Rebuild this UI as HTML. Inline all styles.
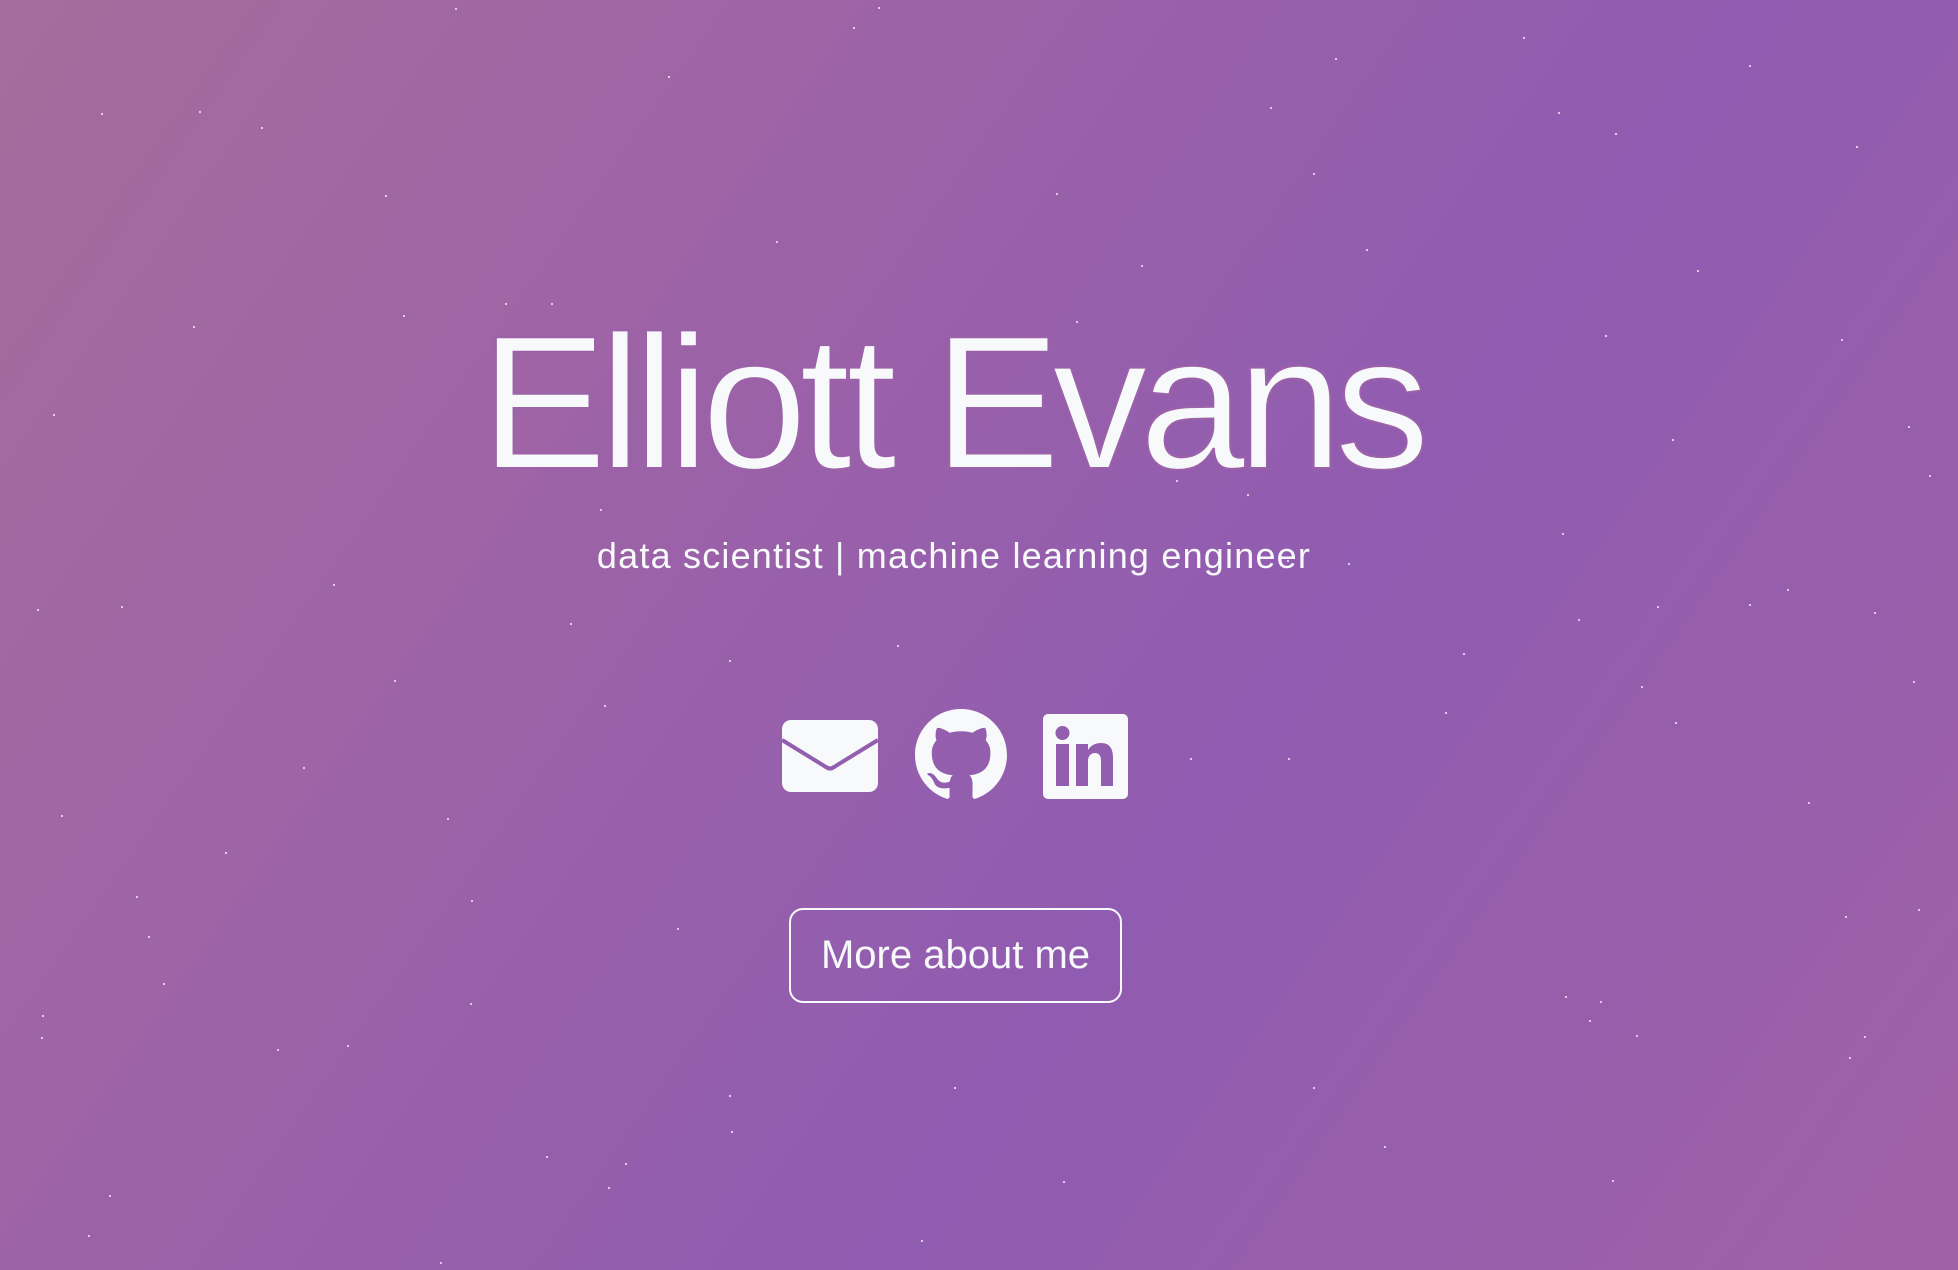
<!DOCTYPE html>
<html><head><meta charset="utf-8"><style>
html,body{margin:0;padding:0;}
body{width:1958px;height:1270px;overflow:hidden;position:relative;
background:linear-gradient(125deg,#a66c9c 0%,#9c62a8 35%,#905cb1 62%,#9a5faa 85%,#a161a7 100%);
font-family:"Liberation Sans",sans-serif;color:#f8f9fa;}
.t{position:absolute;left:0;width:1958px;text-align:center;}
h1{position:absolute;left:-28px;width:1958px;text-align:center;margin:0;top:298px;font-size:190px;font-weight:normal;letter-spacing:-8px;line-height:210px;-webkit-text-stroke:2px #9b62a9;}
.sub{top:534px;font-size:36px;line-height:44px;letter-spacing:1.2px;left:-25px;}
.btn{position:absolute;left:789px;top:908px;width:329px;height:91px;border:2px solid #f8f9fa;border-radius:14px;font-size:40px;line-height:91px;text-align:center;}
.s{position:absolute;width:2px;height:2px;background:#fff;border-radius:1px;opacity:.9}
</style></head><body>
<h1>Elliott Evans</h1>
<div class="t sub">data scientist | machine learning engineer</div>
<svg style="position:absolute;left:782px;top:720px" width="96" height="72" viewBox="0 0 96 72">
<rect x="0" y="0" width="96" height="72" rx="9" fill="#f8f9fa"/>
<path d="M0 20 L44 47 Q48 50 52 47 L96 20" fill="none" stroke="#935db0" stroke-width="4"/>
</svg>
<svg style="position:absolute;left:914px;top:709px" width="94" height="92" viewBox="0 0 16 16">
<path fill="#f8f9fa" d="M8 0C3.58 0 0 3.58 0 8c0 3.54 2.29 6.53 5.470 7.59.4.07.55-.17.55-.38 0-.19-.01-.82-.01-1.49-2.01.37-2.53-.49-2.69-.94-.09-.23-.48-.94-.82-1.130-.28-.15-.68-.52-.01-.53.63-.01 1.08.58 1.23.82.72 1.21 1.87.87 2.33.66.07-.52.28-.87.51-1.07-1.78-.2-3.64-.89-3.64-3.95 0-.87.31-1.59.82-2.15-.08-.2-.36-1.02.08-2.12 0 0 .67-.21 2.2.82.64-.18 1.32-.27 2-.27.68 0 1.36.09 2 .27 1.53-1.04 2.2-.82 2.2-.82.44 1.1.16 1.92.08 2.12.51.56.82 1.27.82 2.15 0 3.07-1.87 3.75-3.65 3.95.29.25.54.73.54 1.48 0 1.07-.01 1.93-.01 2.2 0 .21.15.46.55.38A8.013 8.013 0 0016 8c0-4.42-3.58-8-8-8z"/>
</svg>
<svg style="position:absolute;left:1043px;top:714px" width="85" height="85" viewBox="0 0 85 85">
<rect width="85" height="85" rx="5" fill="#f8f9fa"/>
<rect x="13" y="30" width="13" height="42" fill="#935db0"/>
<circle cx="19.5" cy="19" r="7" fill="#935db0"/>
<path d="M33 30h12v6c3-5 8-7 13-7 9 0 12 6 12 15v28H58V47c0-5-2-8-6-8s-7 3-7 8v25H33z" fill="#935db0"/>
</svg>
<div class="btn">More about me</div>
<div class="s" style="left:101px;top:113px"></div><div class="s" style="left:199px;top:111px"></div><div class="s" style="left:261px;top:127px"></div><div class="s" style="left:385px;top:195px"></div><div class="s" style="left:455px;top:8px"></div><div class="s" style="left:668px;top:76px"></div><div class="s" style="left:853px;top:27px"></div><div class="s" style="left:878px;top:7px"></div><div class="s" style="left:776px;top:241px"></div><div class="s" style="left:1056px;top:193px"></div><div class="s" style="left:1141px;top:265px"></div><div class="s" style="left:1313px;top:173px"></div><div class="s" style="left:1335px;top:58px"></div><div class="s" style="left:1270px;top:107px"></div><div class="s" style="left:1366px;top:249px"></div><div class="s" style="left:1523px;top:37px"></div><div class="s" style="left:1558px;top:112px"></div><div class="s" style="left:1615px;top:133px"></div><div class="s" style="left:1697px;top:270px"></div><div class="s" style="left:1749px;top:65px"></div><div class="s" style="left:1856px;top:146px"></div><div class="s" style="left:1841px;top:339px"></div><div class="s" style="left:1908px;top:426px"></div><div class="s" style="left:1929px;top:475px"></div><div class="s" style="left:1672px;top:439px"></div><div class="s" style="left:1605px;top:335px"></div><div class="s" style="left:1562px;top:533px"></div><div class="s" style="left:1578px;top:619px"></div><div class="s" style="left:1657px;top:606px"></div><div class="s" style="left:1749px;top:604px"></div><div class="s" style="left:1787px;top:589px"></div><div class="s" style="left:1874px;top:612px"></div><div class="s" style="left:1913px;top:681px"></div><div class="s" style="left:1641px;top:686px"></div><div class="s" style="left:1675px;top:722px"></div><div class="s" style="left:1445px;top:712px"></div><div class="s" style="left:1463px;top:653px"></div><div class="s" style="left:1288px;top:758px"></div><div class="s" style="left:1808px;top:802px"></div><div class="s" style="left:1845px;top:916px"></div><div class="s" style="left:1918px;top:909px"></div><div class="s" style="left:1565px;top:996px"></div><div class="s" style="left:1600px;top:1001px"></div><div class="s" style="left:1636px;top:1035px"></div><div class="s" style="left:1589px;top:1020px"></div><div class="s" style="left:1864px;top:1036px"></div><div class="s" style="left:1849px;top:1057px"></div><div class="s" style="left:1612px;top:1180px"></div><div class="s" style="left:1384px;top:1146px"></div><div class="s" style="left:1313px;top:1087px"></div><div class="s" style="left:1063px;top:1181px"></div><div class="s" style="left:954px;top:1087px"></div><div class="s" style="left:921px;top:1240px"></div><div class="s" style="left:729px;top:1095px"></div><div class="s" style="left:731px;top:1131px"></div><div class="s" style="left:625px;top:1163px"></div><div class="s" style="left:608px;top:1187px"></div><div class="s" style="left:546px;top:1156px"></div><div class="s" style="left:440px;top:1262px"></div><div class="s" style="left:109px;top:1195px"></div><div class="s" style="left:88px;top:1235px"></div><div class="s" style="left:277px;top:1049px"></div><div class="s" style="left:347px;top:1045px"></div><div class="s" style="left:163px;top:983px"></div><div class="s" style="left:148px;top:936px"></div><div class="s" style="left:136px;top:896px"></div><div class="s" style="left:42px;top:1015px"></div><div class="s" style="left:41px;top:1037px"></div><div class="s" style="left:470px;top:1003px"></div><div class="s" style="left:677px;top:928px"></div><div class="s" style="left:471px;top:900px"></div><div class="s" style="left:225px;top:852px"></div><div class="s" style="left:61px;top:815px"></div><div class="s" style="left:303px;top:767px"></div><div class="s" style="left:447px;top:818px"></div><div class="s" style="left:394px;top:680px"></div><div class="s" style="left:604px;top:705px"></div><div class="s" style="left:729px;top:660px"></div><div class="s" style="left:897px;top:645px"></div><div class="s" style="left:570px;top:623px"></div><div class="s" style="left:333px;top:584px"></div><div class="s" style="left:121px;top:606px"></div><div class="s" style="left:37px;top:609px"></div><div class="s" style="left:53px;top:414px"></div><div class="s" style="left:193px;top:326px"></div><div class="s" style="left:403px;top:315px"></div><div class="s" style="left:505px;top:303px"></div><div class="s" style="left:551px;top:303px"></div><div class="s" style="left:600px;top:509px"></div><div class="s" style="left:1348px;top:563px"></div><div class="s" style="left:1176px;top:480px"></div><div class="s" style="left:1247px;top:494px"></div><div class="s" style="left:1190px;top:758px"></div><div class="s" style="left:1076px;top:321px"></div><div class="s" style="left:1287px;top:560px"></div>
</body></html>
